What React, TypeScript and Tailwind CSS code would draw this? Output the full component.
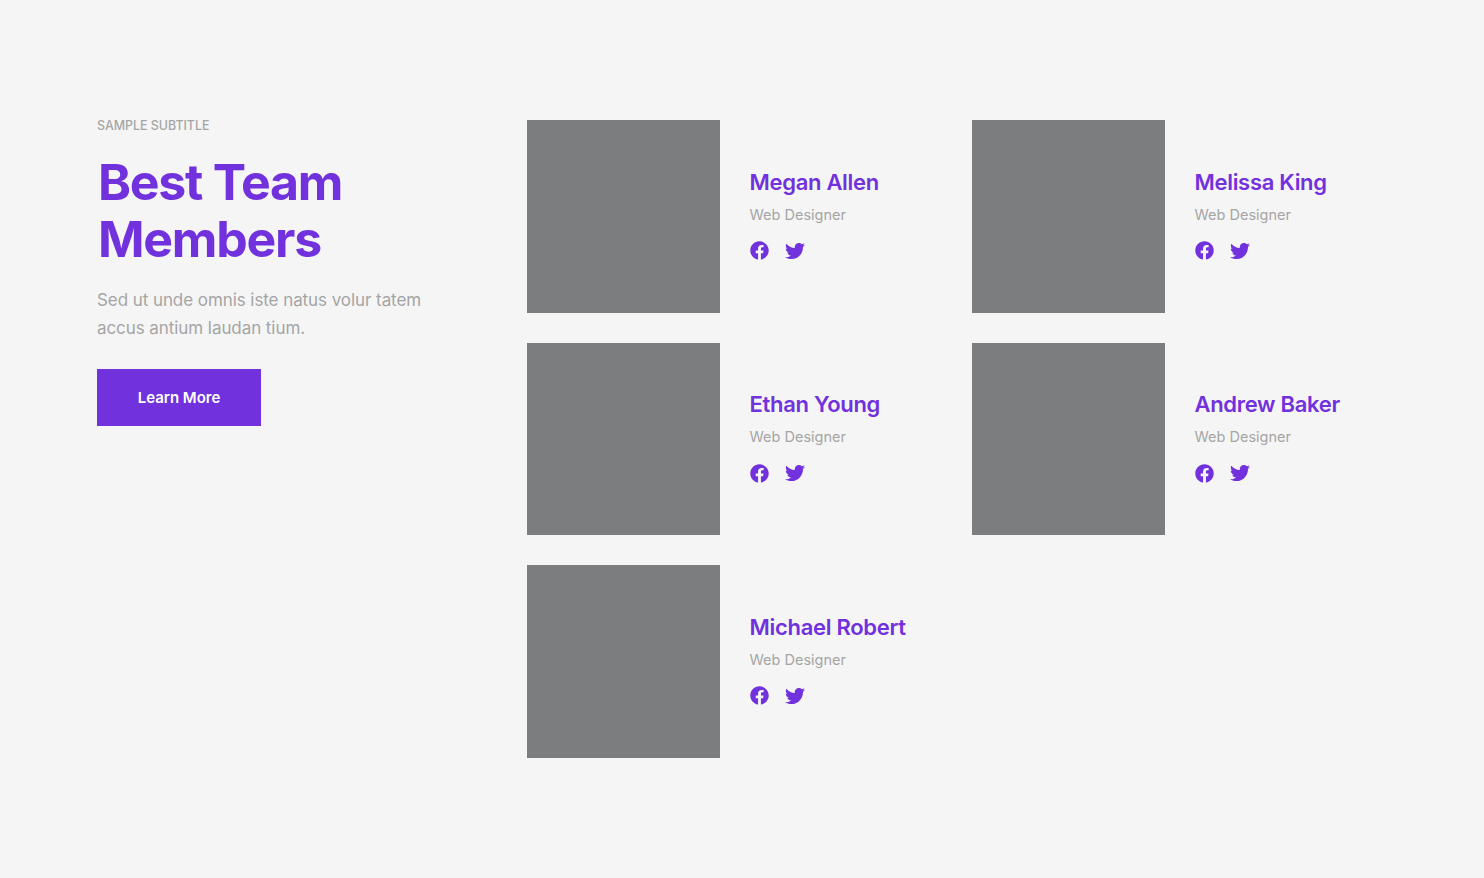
import { FaFacebook, FaTwitter } from "react-icons/fa";

const members = ["Megan Allen", "Melissa King", "Ethan Young", "Andrew Baker", "Michael Robert"];

function Member({ name }: { name: string }) {
  return (
    <div className="flex items-center gap-[30px]">
      <div className="h-[192.5px] w-[192.5px] shrink-0 bg-[#7c7d7e]" />
      <div className="flex flex-col pb-[5px]">
        <h3 className="text-[22px] leading-[30px] font-semibold tracking-[-0.3px] text-[#7131dd]">{name}</h3>
        <p className="mt-[4px] text-[14.5px] leading-[28px] text-[#a5a5a5]">Web Designer</p>
        <div className="mt-[12px] flex items-center gap-[16px] text-[#7131dd]">
          <FaFacebook size={19} />
          <FaTwitter size={20} />
        </div>
      </div>
    </div>
  );
}

export default function App() {
  return (
    <div className="min-h-[878px] bg-[#f5f5f5] font-['Inter',sans-serif]">
      <div className="flex pt-[120px] pl-[97px]">
        <div className="w-[430px] shrink-0">
          <p className="text-[12.4px] leading-[12px] font-medium text-[#a5a5a5]">SAMPLE SUBTITLE</p>
          <h1 className="mt-[22px] pl-px text-[50px] leading-[57px] font-bold tracking-[-1.25px] text-[#7131dd]">
            Best Team
            <br />
            Members
          </h1>
          <p className="mt-[18px] text-[17px] leading-[28px] tracking-[-0.07px] text-[#a5a5a5]">
            Sed ut unde omnis iste natus volur tatem
            <br />
            accus antium laudan tium.
          </p>
          <button className="mt-[27px] h-[57px] w-[164px] bg-[#7131dd] pt-[2px] text-[15px] font-semibold text-white">
            Learn More
          </button>
        </div>
        <div className="grid w-[890px] grid-cols-2 gap-y-[30px]">
          {members.map((m) => (
            <Member key={m} name={m} />
          ))}
        </div>
      </div>
    </div>
  );
}
